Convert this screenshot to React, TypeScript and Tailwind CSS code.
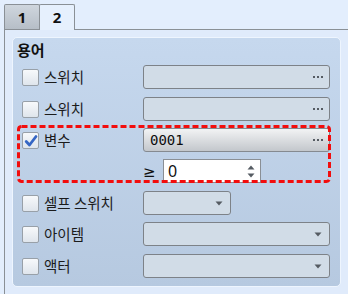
import React from "react";

const font = { fontFamily: '"Noto Sans CJK KR", "Noto Sans", sans-serif' };

function Checkbox({ checked = false }: { checked?: boolean }) {
  return (
    <div className="w-[17px] h-[17px] shrink-0 rounded-[2px] border border-[#98a0a8] bg-gradient-to-b from-[#f7f9fb] to-[#dfe5ec] relative">
      {checked && (
        <svg className="absolute left-[1px] top-[1px]" width="14" height="14" viewBox="0 0 14 14">
          <path d="M2.2 7.5 L5.5 11 L12 2.5" fill="none" stroke="#3566c4" strokeWidth="2.8" strokeLinecap="round" strokeLinejoin="round" />
        </svg>
      )}
    </div>
  );
}

function Dots() {
  return (
    <div className="flex gap-[2px] mr-[6px]">
      <div className="w-[2px] h-[2px] bg-[#555b62]" />
      <div className="w-[2px] h-[2px] bg-[#555b62]" />
      <div className="w-[2px] h-[2px] bg-[#555b62]" />
    </div>
  );
}

function Arrow() {
  return (
    <svg className="mr-[7px]" width="8" height="5" viewBox="0 0 8 5">
      <path d="M0.5 0.5 L7.5 0.5 L4 4.5 Z" fill="#555b62" />
    </svg>
  );
}

function Label({ text }: { text: string }) {
  return (
    <div className="w-[126px] shrink-0 flex items-center pl-[5px] gap-[5px]">
      <Checkbox />
      <span className="text-[14.5px] text-[#1b1b1b] leading-none">{text}</span>
    </div>
  );
}

function FieldDots() {
  return (
    <div className="w-[187px] h-[24px] rounded-[3px] border border-[#7d8288] bg-[#d1dce7] flex items-center justify-end">
      <Dots />
    </div>
  );
}

function Combo({ w }: { w: string }) {
  return (
    <div className={`${w} h-[24px] rounded-[3px] border border-[#7d8288] bg-[#d1dce7] flex items-center justify-end`}>
      <Arrow />
    </div>
  );
}

export default function App() {
  return (
    <div className="w-[348px] h-[294px] bg-[#e3eefd] overflow-hidden" style={font}>
      <div className="h-[4px]" />
      <div className="flex items-start h-[25px] pl-[4px]">
        <div className="w-[36px] h-[25px] border border-b-0 border-[#8a9096] rounded-t-[2px] bg-gradient-to-b from-[#cfd6de] to-[#b6bec7] flex items-center justify-center">
          <span className="text-[15px] font-bold text-[#111]" style={{ fontFamily: '"Noto Sans", sans-serif' }}>1</span>
        </div>
        <div className="w-[36px] h-[26px] -ml-px border border-b-0 border-[#8a9096] rounded-t-[2px] bg-[#e6f0fd] relative z-10 flex items-center justify-center">
          <span className="text-[15px] font-bold text-[#111]" style={{ fontFamily: '"Noto Sans", sans-serif' }}>2</span>
        </div>
      </div>
      <div className="ml-[4px] h-[265px] border-l border-t border-[#8a9096] bg-[#e0ebfb] pl-[7px] pt-[7px]">
        <div className="w-[329px] h-[250px] rounded-[5px] border border-[#eef5fe] bg-gradient-to-b from-[#c6d8ee] to-[#b6c9e0] relative pl-[4px] pt-[2px]">
          <div className="text-[15px] font-bold text-[#111] leading-[20px]">용어</div>

          <div className="mt-[5px] flex items-center h-[24px]">
            <Label text="스위치" />
            <FieldDots />
          </div>

          <div className="mt-[8px] flex items-center h-[24px]">
            <Label text="스위치" />
            <FieldDots />
          </div>

          <div className="mt-[7px] flex items-center h-[24px]">
            <div className="w-[126px] shrink-0 flex items-center pl-[5px] gap-[5px]">
              <Checkbox checked />
              <span className="text-[14.5px] text-[#1b1b1b] leading-none">변수</span>
            </div>
            <div className="w-[187px] h-[24px] rounded-[3px] border border-[#858a90] bg-gradient-to-b from-[#f2f3f4] to-[#c3c7cc] flex items-center justify-between">
              <span className="ml-[6px] text-[14px] font-medium text-[#0d0d0d] leading-none" style={{ fontFamily: '"DejaVu Sans Mono", monospace' }}>0001</span>
              <Dots />
            </div>
          </div>

          <div className="mt-[7px] flex items-center h-[24px]">
            <div className="w-[126px] shrink-0" />
            <span className="w-[20px] pt-[3px] text-[15px] text-[#111] leading-none" style={{ fontFamily: '"DejaVu Sans", sans-serif' }}>≥</span>
            <div className="w-[98px] h-[24px] border border-[#8a8f95] bg-white flex items-center justify-between">
              <span className="ml-[4px] text-[16px] text-[#111] leading-none" style={{ fontFamily: '"Noto Sans", sans-serif' }}>0</span>
              <div className="flex flex-col gap-[3px] mr-[5px]">
                <svg width="8" height="5" viewBox="0 0 8 5"><path d="M4 0.5 L7.5 4.5 L0.5 4.5 Z" fill="#555b62" /></svg>
                <svg width="8" height="5" viewBox="0 0 8 5"><path d="M0.5 0.5 L7.5 0.5 L4 4.5 Z" fill="#555b62" /></svg>
              </div>
            </div>
          </div>

          <div className="mt-[8px] flex items-center h-[24px]">
            <Label text="셀프 스위치" />
            <Combo w="w-[88px]" />
          </div>

          <div className="mt-[7px] flex items-center h-[24px]">
            <Label text="아이템" />
            <Combo w="w-[187px]" />
          </div>

          <div className="mt-[8px] flex items-center h-[24px]">
            <Label text="액터" />
            <Combo w="w-[187px]" />
          </div>

          <svg className="absolute left-[4px] top-[87px]" width="314" height="58" viewBox="0 0 314 58">
            <rect x="1.5" y="1.5" width="311" height="55" rx="3" fill="none" stroke="#f20d0d" strokeWidth="3" strokeDasharray="6 3" />
          </svg>
        </div>
      </div>
    </div>
  );
}
